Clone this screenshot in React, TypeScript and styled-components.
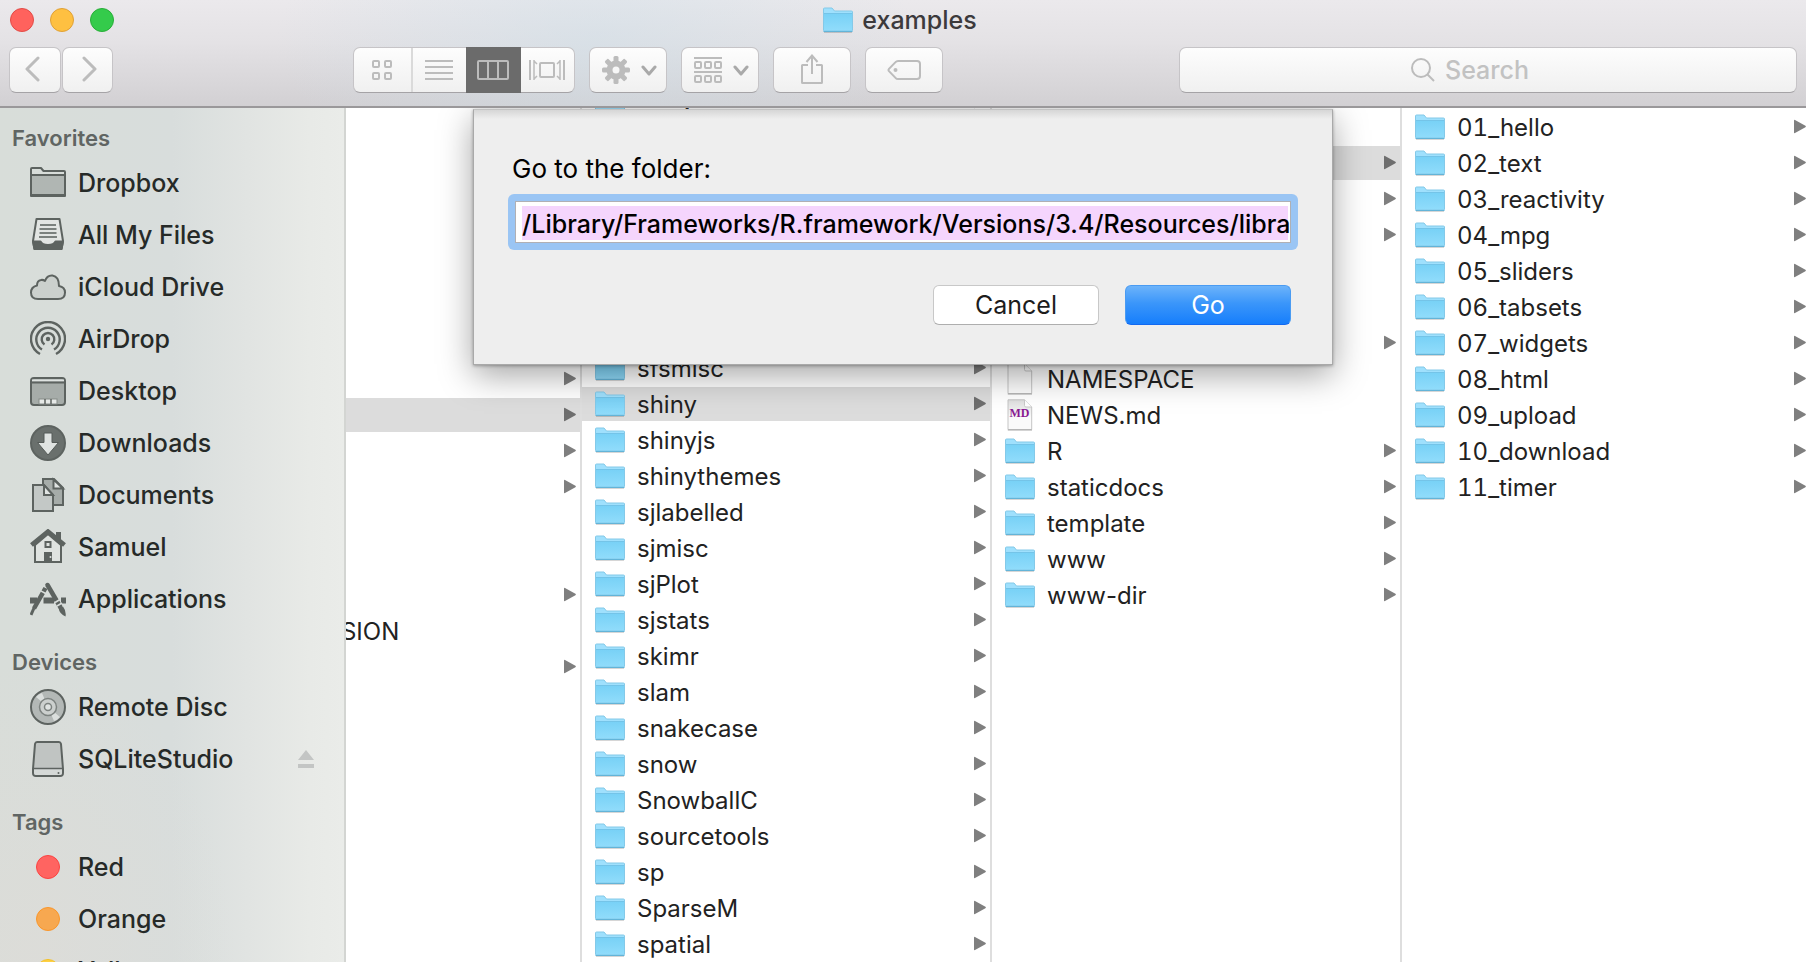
import React from "react";
import styled, { createGlobalStyle, css } from "styled-components";

const GlobalStyle = createGlobalStyle`
  *, *::before, *::after { box-sizing: border-box; }
  html, body, #root { height: 100%; }
  body {
    margin: 0;
    overflow: hidden;
    background: #fff;
    color: #262626;
    font-family: Inter, "Liberation Sans", sans-serif;
  }
  button, input { font-family: inherit; }
  h1, h2, ul { margin: 0; }
  svg { display: block; flex: none; }
`;

/* ---------- window frame ---------- */

const Window = styled.div`
  display: flex;
  flex-direction: column;
  height: 100vh;
`;

const Header = styled.header`
  flex: none;
  border-bottom: 2px solid #9a989a;
  padding-bottom: 13px;
  background:
    radial-gradient(ellipse 320px 160px at 33% 40%, rgba(205, 222, 232, 0.5), rgba(205, 222, 232, 0)),
    linear-gradient(#ebe9ec, #e4e2e5 40%, #d2d0d3);
`;

const TitleBar = styled.div`
  display: grid;
  grid-template-columns: 1fr auto 1fr;
  align-items: center;
  height: 40px;
  margin-bottom: 7px;
  padding: 0 16px 0 10px;
`;

const Lights = styled.div`
  display: flex;
  gap: 16px;
`;

const Light = styled.button<{ $fill: string; $edge: string }>`
  width: 24px;
  height: 24px;
  padding: 0;
  border: 1px solid ${(p) => p.$edge};
  border-radius: 50%;
  background: ${(p) => p.$fill};
`;

const Title = styled.h1`
  display: flex;
  align-items: center;
  gap: 9px;
  font-size: 25px;
  line-height: 32px;
  font-weight: 500;
  color: #3c3a3c;
`;

const Toolbar = styled.div`
  display: flex;
  align-items: center;
  gap: 14px;
  padding: 0 9px;
`;

const surface = css`
  height: 46px;
  border: 1px solid #c6c4c7;
  border-bottom-color: #a5a3a6;
  border-radius: 7px;
  background: linear-gradient(#fdfdfd, #f0f0f0);
  color: #bcbcbc;
`;

const ToolButton = styled.button<{ $width: number; $menu?: boolean }>`
  ${surface}
  display: flex;
  align-items: center;
  justify-content: center;
  gap: 11px;
  width: ${(p) => p.$width}px;
  padding: ${(p) => (p.$menu ? "0 0 0 2px" : "0")};
`;

const NavGroup = styled.div`
  display: flex;
  gap: 1px;
  margin-right: 226px;
`;

const Segments = styled.div`
  ${surface}
  display: flex;
  width: 222px;
`;

const Segment = styled.button<{ $active?: boolean; $first?: boolean }>`
  flex: ${(p) => (p.$first ? 58 : p.$active ? 56 : 53)} 1 0;
  display: flex;
  align-items: center;
  justify-content: center;
  margin: ${(p) => (p.$active ? "-1px 0" : "0")};
  padding: 0 2px 0 0;
  border: 0;
  border-right: ${(p) => (p.$first ? "2px solid #dadada" : "0")};
  background: ${(p) => (p.$active ? "#6b6b6b" : "transparent")};
  color: inherit;
`;

const Search = styled.label`
  ${surface}
  flex: 0 1 618px;
  display: flex;
  align-items: center;
  justify-content: center;
  gap: 10px;
  margin-left: auto;
`;

const SearchInput = styled.input`
  width: 120px;
  padding: 0;
  border: 0;
  outline: 0;
  background: none;
  font-size: 25px;
  line-height: 32px;
  font-weight: 500;
  color: #333;
  &::placeholder { color: #c2c2c2; opacity: 1; }
`;

const Body = styled.div`
  position: relative;
  flex: 1;
  min-height: 0;
  display: flex;
  overflow: hidden;
`;

/* ---------- sidebar ---------- */

const Sidebar = styled.nav`
  flex: none;
  display: flex;
  flex-direction: column;
  gap: 19px;
  width: 346px;
  padding-top: 12px;
  overflow: hidden;
  border-right: 2px solid #d3d5d2;
  background:
    radial-gradient(ellipse 200px 300px at 10% 100%, rgba(222, 220, 216, 0.7), rgba(222, 220, 216, 0)),
    linear-gradient(90deg, #d8ddd9, #d8dddc 50%, #e1e4e2 72%, #e8eae7 90%, #eaece9);
`;

const GroupTitle = styled.h2`
  padding-left: 12px;
  font-size: 22px;
  line-height: 37px;
  font-weight: 600;
  color: #606563;
`;

const Places = styled.ul`
  padding: 0;
  list-style: none;
`;

const Place = styled.li`
  display: flex;
  align-items: center;
  height: 52px;
  padding: 0 30px;
`;

const PlaceLink = styled.a`
  flex: 1;
  display: flex;
  align-items: center;
  gap: 12px;
  font-size: 25px;
  line-height: 32px;
  font-weight: 500;
  color: #262a28;
  text-decoration: none;
  white-space: nowrap;
`;

const Eject = styled.button`
  padding: 0;
  border: 0;
  background: none;
  color: #c3c5c4;
`;

const TagSlot = styled.span`
  flex: none;
  display: flex;
  justify-content: center;
  width: 36px;
`;

const TagDot = styled.span<{ $fill: string; $edge: string }>`
  width: 24px;
  height: 24px;
  border: 1px solid ${(p) => p.$edge};
  border-radius: 50%;
  background: ${(p) => p.$fill};
`;

/* ---------- columns ---------- */

const Columns = styled.main`
  flex: 1;
  min-width: 0;
  display: flex;
  overflow: hidden;
`;

const ScrolledColumn = styled.div`
  flex: none;
  display: flex;
  justify-content: flex-end;
  width: 236px;
  overflow: hidden;
`;

const Column = styled.ul<{ $scrolled?: boolean; $numbered?: boolean }>`
  flex: 1 0 410px;
  display: flex;
  flex-direction: column;
  gap: 2px;
  margin-top: ${(p) => (p.$scrolled ? "-11px" : "0")};
  padding: 2px 0 0;
  list-style: none;
  border-right: 2px solid #dedede;
  font-variant-numeric: ${(p) => (p.$numbered ? "tabular-nums" : "normal")};
`;

const Row = styled.li<{ $selected?: boolean }>`
  flex: none;
  display: flex;
  align-items: center;
  justify-content: flex-end;
  height: 34px;
  padding: 0 4px 0 13px;
  background: ${(p) => (p.$selected ? "#dcdcdc" : "transparent")};
  color: ${(p) => (p.$selected ? "#6e6e6e" : "#7f7f7f")};
`;

const Entry = styled.a`
  flex: 1;
  display: flex;
  align-items: center;
  gap: 12px;
  font-size: 24px;
  line-height: 34px;
  color: #222;
  text-decoration: none;
  white-space: nowrap;
`;

const IconSlot = styled.span`
  display: flex;
  justify-content: center;
  width: 30px;
`;

const EntryName = styled.span`
  padding-top: 2px;
  line-height: 32px;
`;

/* ---------- sheet ---------- */

const Sheet = styled.form`
  position: absolute;
  top: 1px;
  left: 0;
  right: 0;
  width: 860px;
  max-width: 100%;
  margin: 0 auto;
  padding: 44px 41px 39px;
  border: 1px solid #a9a9a9;
  border-top-color: #c2c2c2;
  background: linear-gradient(#d6d6d6, #eee 9px);
  box-shadow: 0 10px 32px rgba(0, 0, 0, 0.36), 0 1px 3px rgba(0, 0, 0, 0.3);
`;

const SheetLabel = styled.label`
  display: block;
  margin: 0 0 17px -3px;
  font-size: 26px;
  line-height: 30px;
  color: #000;
`;

const FocusRing = styled.div`
  margin: -7px;
  padding: 7px;
  border-radius: 6px;
  background: #9ac5f4;
`;

const PathInput = styled.input`
  display: block;
  width: 100%;
  height: 42px;
  padding: 6px 0 2px 6px;
  border: 1px solid #b0b0b4;
  border-radius: 0;
  outline: 0;
  background: #f5d5fd;
  box-shadow:
    inset 6px 0 #fff,
    inset -2px 0 #fff,
    inset 0 4px #fff,
    inset 0 -2px #fff;
  font-size: 25px;
  line-height: 32px;
  font-weight: 500;
  color: #000;
`;

const Actions = styled.div`
  display: flex;
  justify-content: flex-end;
  gap: 26px;
  margin-top: 42px;
`;

const SheetButton = styled.button<{ $primary?: boolean }>`
  width: 166px;
  height: 40px;
  padding: 0;
  border: 1px solid ${(p) => (p.$primary ? "#4a9bf2" : "#c8c8c8")};
  border-bottom-color: ${(p) => (p.$primary ? "#1369f0" : "#aeaeae")};
  border-radius: 6px;
  background: ${(p) => (p.$primary ? "linear-gradient(#6cb3fa, #3b96fa 45%, #167efc)" : "#fff")};
  font-size: 25px;
  line-height: 32px;
  color: ${(p) => (p.$primary ? "#fff" : "#1c1c1c")};
`;

/* ---------- drawings ---------- */

const Folder = () => (
  <svg width="30" height="26" viewBox="0 0 30 26">
    <defs>
      <linearGradient id="folderFace" x1="0" y1="0" x2="0" y2="1">
        <stop offset="0" stopColor="#78d1f6" />
        <stop offset="1" stopColor="#90dcfb" />
      </linearGradient>
    </defs>
    <path d="M1 25h28" stroke="#000" strokeOpacity=".16" strokeWidth="2" />
    <path d="M.5 23.5V2Q.5 1 1.500 1H9l2.500 3H28.500Q29.500 4 29.500 5V23.500Z" fill="#9fe0fd" stroke="#84c9e8" />
    <path d="M1 6.500H29V23.500H1Z" fill="url(#folderFace)" />
    <path d="M1 6.500H29" stroke="#74c4e8" />
    <path d="M.5 24.500H29.500" stroke="#63b4d8" />
  </svg>
);

const Arrow = () => (
  <svg width="12" height="16" viewBox="0 0 12 16">
    <path d="M0 1.500V13.500Q0 14.600 1 14.100L11.400 8.200Q12.300 7.500 11.400 6.800L1 .9Q0 .4 0 1.500Z" fill="currentColor" />
  </svg>
);

const FileIcon = ({ md }: { md?: boolean }) => (
  <svg width="26" height="32" viewBox="0 0 26 32">
    <defs>
      <linearGradient id="paper" x1="0" y1="0" x2="0" y2="1">
        <stop offset="0" stopColor="#dedede" />
        <stop offset=".6" stopColor="#fafafa" />
      </linearGradient>
    </defs>
    <path d="M1 .8H17.500L24.700 8V30.500H1Z" fill={md ? "url(#paper)" : "#fdfdfd"} stroke="#c4c4c4" />
    <path d="M17.500.8V6.500Q17.500 8 19 8H24.700" fill="#fff" stroke="#c9c9c9" />
    <path d="M.8 31H25" stroke="#a8a8a8" />
    {md && (
      <text x="12.500" y="18" textAnchor="middle" fontFamily="Liberation Serif, serif" fontWeight="700" fontSize="12" fill="#8a1a92">
        MD
      </text>
    )}
  </svg>
);

const glyph = { fill: "none", stroke: "currentColor" } as const;

const Chevron = ({ flip }: { flip?: boolean }) => (
  <svg width="20" height="28" viewBox="0 0 20 28" {...glyph} strokeWidth="3" strokeLinecap="round" strokeLinejoin="round">
    <path d={flip ? "M6 2L17 13L6 24" : "M13 2L2 13L13 24"} />
  </svg>
);

const DownChevron = () => (
  <svg width="16" height="12" viewBox="0 0 16 12" fill="none" stroke="#a9a9a9" strokeWidth="3" strokeLinecap="round" strokeLinejoin="round">
    <path d="M2 3L8 10L14 3" />
  </svg>
);

const GridIcon = () => (
  <svg width="20" height="20" viewBox="0 0 20 20" {...glyph} strokeWidth="2">
    <rect x="1" y="1" width="6" height="6" rx="1" />
    <rect x="13" y="1" width="6" height="6" rx="1" />
    <rect x="1" y="13" width="6" height="6" rx="1" />
    <rect x="13" y="13" width="6" height="6" rx="1" />
  </svg>
);

const ListIcon = () => (
  <svg width="28" height="20" viewBox="0 0 28 20" {...glyph} strokeWidth="2">
    <path d="M0 1H28M0 7H28M0 13H28M0 19H28" />
  </svg>
);

const ColumnsIcon = () => (
  <svg width="32" height="20" viewBox="0 0 32 20" {...glyph} strokeWidth="2">
    <rect x="1" y="1" width="30" height="18" rx="1" />
    <path d="M11 1V19M21 1V19" />
  </svg>
);

const FlowIcon = () => (
  <svg width="36" height="20" viewBox="0 0 36 20" {...glyph} strokeWidth="2">
    <path d="M1 0V20M35 0V20" />
    <rect x="11" y="3" width="14" height="14" rx="1" />
    <path d="M5 1L8 4M5 0V20M5 19L8 16M31 0V20M31 1L28 4M31 19L28 16" strokeWidth="1.500" />
  </svg>
);

const GearIcon = () => (
  <svg width="28" height="28" viewBox="-14 -14 28 28" fill="currentColor">
    {[0, 45, 90, 135].map((a) => (
      <rect key={a} x="-2.500" y="-14" width="5" height="28" rx="1.500" transform={`rotate(${a})`} />
    ))}
    <circle r="9.500" />
    <circle r="3.500" fill="#f7f7f7" />
  </svg>
);

const ArrangeIcon = () => (
  <svg width="28" height="26" viewBox="0 0 28 26" {...glyph} strokeWidth="2">
    <path d="M0 1H28M0 15H28" />
    {[5, 19].map((y) => [1, 11, 21].map((x) => <rect key={`${x}-${y}`} x={x} y={y} width="6" height="6" rx="1" />))}
  </svg>
);

const ShareIcon = () => (
  <svg width="24" height="32" viewBox="0 0 24 32" {...glyph} strokeWidth="2">
    <path d="M8 11H2.500Q2 11 2 11.500V28.500Q2 29 2.500 29H21.500Q22 29 22 28.500V11.500Q22 11 21.500 11H16" />
    <path d="M12 20V2M6.500 8L12 1.500L17.500 8" />
  </svg>
);

const TagIcon = () => (
  <svg width="34" height="20" viewBox="0 0 34 20" {...glyph} strokeWidth="2">
    <path d="M11 1H30Q33 1 33 4V16Q33 19 30 19H11Q9.500 19 8.500 17.800L2 11.200Q1 10 2 8.800L8.500 2.200Q9.500 1 11 1Z" />
    <circle cx="8.500" cy="10" r="2" fill="currentColor" stroke="none" />
  </svg>
);

const SearchIcon = () => (
  <svg width="24" height="24" viewBox="0 0 24 24" {...glyph} strokeWidth="2">
    <circle cx="10" cy="10" r="9" />
    <path d="M16.500 16.500L23 23" />
  </svg>
);

const ink = "#5d6360";
const wash = "rgba(93,99,96,.32)";

const placeIcons: Record<string, React.ReactNode> = {
  dropbox: (
    <g fill="none" stroke={ink} strokeWidth="2" strokeLinejoin="round">
      <path d="M1 31V4Q1 3 2 3H11L13.500 6H34Q35 6 35 7V31Z" />
      <path d="M1 11Q1 10 2 10H34Q35 10 35 11V29Q35 30 34 30H2Q1 30 1 29Z" fill={wash} />
    </g>
  ),
  files: (
    <g fill="none" stroke={ink} strokeWidth="2" strokeLinejoin="round">
      <path d="M6.500 2H29.500L33 24L31.500 32H4.500L3 24Z" fill="rgba(255,255,255,.25)" />
      <path d="M3 24.500H10.500Q12 28 18 28T25.500 24.500H33L31.500 32H4.500Z" fill={ink} />
      <path d="M10 8H26M9.500 12H26.500M9.500 16H26.500M9 20H27" stroke="#7b817e" />
    </g>
  ),
  cloud: (
    <path
      d="M8 30Q1 30 1 23.500Q1 18 7 16.500Q7 11.500 11 11Q13 10.500 15 12Q17 6 22.500 6.500Q29 7.500 29 17Q35 18 35 23.500Q35 30 28 30Z"
      fill="rgba(93,99,96,.1)"
      stroke={ink}
      strokeWidth="2"
      strokeLinejoin="round"
    />
  ),
  airdrop: (
    <g fill="none" stroke={ink} strokeWidth="2.400">
      <path d="M10 33A17 17 0 1 1 26 33" />
      <path d="M12 28.500A11.700 11.700 0 1 1 24 28.500" />
      <path d="M14.500 23.500A6.300 6.300 0 1 1 21.500 23.500" />
      <circle cx="18" cy="18" r="2.200" fill={ink} stroke="none" />
    </g>
  ),
  desktop: (
    <g fill="none" stroke={ink} strokeWidth="2">
      <rect x="1" y="5" width="34" height="27" rx="3" fill="rgba(93,99,96,.4)" />
      <path d="M2 7.500H34" stroke="#dfe3e1" />
      <path d="M1 9.500H35" />
      <rect x="9" y="26" width="18" height="5" fill="#e6e9e7" stroke="#858b88" strokeWidth="1" />
      <path d="M15 26V31M21 26V31" strokeWidth="1.500" />
    </g>
  ),
  downloads: (
    <g>
      <circle cx="18" cy="18" r="17" fill="#6a706d" stroke={ink} strokeWidth="2" />
      <path d="M14 8H22V17.500H28.500L18 30L7.500 17.500H14Z" fill="#dfe3e1" stroke="#555b58" />
    </g>
  ),
  documents: (
    <g stroke={ink} strokeWidth="2">
      <path d="M13 2H24L33 11V28H13Z" fill="rgba(93,99,96,.4)" />
      <path d="M23.500 2.500V11.500H33Z" fill="#e0e4e2" />
      <path d="M3 8H14L23 18V34H3Z" fill="#c3c8c6" />
      <path d="M14 8V18H23Z" fill="#e0e4e2" />
    </g>
  ),
  home: (
    <g fill="none" stroke={ink} strokeWidth="2">
      <path d="M5 16V33H31V16L18 5Z" fill="rgba(255,255,255,.18)" />
      <path d="M1.500 16L18 2.500L34.500 16" strokeWidth="4.500" />
      <path d="M28.500 3V11" strokeWidth="5" />
      <rect x="15.500" y="13" width="5" height="5" />
      <path d="M14 23H22V33H14Z" fill={ink} stroke="none" />
      <circle cx="20.500" cy="28" r="1" fill="#dfe3e1" stroke="none" />
    </g>
  ),
  apps: (
    <g fill="none" stroke={ink}>
      <path d="M0 19.500H7M13.500 19.500H24M31 19.500H36" strokeWidth="6" />
      <path d="M15.500 7L4 27.500" strokeWidth="4.500" strokeDasharray="4 1.500 24" />
      <path d="M4 27L1 34" strokeWidth="3" />
      <path d="M17.500 4L30 25.500" strokeWidth="4.500" strokeLinecap="round" />
      <path d="M25 21.500L30 18.500M27 25L32 22" stroke="#d8dddb" strokeWidth="1.500" />
      <path d="M28.500 27Q29.500 33 35.500 35.500Q36.500 30 33 25.500Z" fill={ink} stroke="none" />
    </g>
  ),
  disc: (
    <g fill="none" stroke={ink}>
      <circle cx="18" cy="18" r="17" fill="#b3b8b6" strokeWidth="2" />
      <path d="M18 18L6 8Q8.500 5 12 4ZM18 18L30 28Q27.500 31 24 32Z" fill="#dbdfdd" stroke="none" />
      <circle cx="18" cy="18" r="8.500" fill="#ccd0ce" stroke="#7d8380" strokeWidth="1.500" />
      <circle cx="18" cy="18" r="3.500" fill="#dfe3e1" stroke="#7d8380" strokeWidth="1.500" />
    </g>
  ),
  drive: (
    <g fill="none" stroke={ink} strokeWidth="2" strokeLinejoin="round">
      <path d="M7 1H29Q30.500 1 31 3L33 28V32Q33 35 30 35H6Q3 35 3 32V28L5 3Q5.500 1 7 1Z" fill="#c0c4c2" />
      <path d="M4 28H32V32Q32 34 30 34H6Q4 34 4 32Z" fill="#d5d9d7" stroke="none" />
      <path d="M3 27.500H33" strokeWidth="1.500" />
      <circle cx="28.500" cy="32" r="1" fill={ink} stroke="none" />
    </g>
  ),
};

const PlaceIcon = ({ name }: { name: string }) => (
  <svg width="36" height="36" viewBox="0 0 36 36">{placeIcons[name]}</svg>
);

/* ---------- data ---------- */

const favorites = [
  ["dropbox", "Dropbox"],
  ["files", "All My Files"],
  ["cloud", "iCloud Drive"],
  ["airdrop", "AirDrop"],
  ["desktop", "Desktop"],
  ["downloads", "Downloads"],
  ["documents", "Documents"],
  ["home", "Samuel"],
  ["apps", "Applications"],
];

const tags = [
  ["Red", "#ff6461", "#fb4341"],
  ["Orange", "#f7a850", "#fa962a"],
  ["Yellow", "#fdd044", "#f5c023"],
];

type Item = { name?: string; kind?: "file" | "md"; leaf?: boolean; selected?: boolean };

const blank = (n: number): Item[] => Array.from({ length: n }, () => ({ leaf: true }));
const folders = (...names: string[]): Item[] => names.map((name) => ({ name }));

const parentItems: Item[] = [
  ...blank(7),
  {},
  { selected: true },
  {},
  {},
  ...blank(2),
  {},
  { name: "SVN-REVISION", kind: "file", leaf: true },
  {},
];

const libraryItems: Item[] = [
  { name: "rprojroot" },
  ...blank(6),
  { name: "sfsmisc" },
  { name: "shiny", selected: true },
  ...folders(
    "shinyjs", "shinythemes", "sjlabelled", "sjmisc", "sjPlot", "sjstats", "skimr", "slam",
    "snakecase", "snow", "SnowballC", "sourcetools", "sp", "SparseM", "spatial",
  ),
];

const shinyItems: Item[] = [
  ...blank(1),
  { selected: true },
  {},
  {},
  ...blank(2),
  {},
  { name: "NAMESPACE", kind: "file", leaf: true },
  { name: "NEWS.md", kind: "md", leaf: true },
  ...folders("R", "staticdocs", "template", "www", "www-dir"),
];

const exampleItems = folders(
  "01_hello", "02_text", "03_reactivity", "04_mpg", "05_sliders", "06_tabsets",
  "07_widgets", "08_html", "09_upload", "10_download", "11_timer",
);

type ItemColumnProps = { items: Item[]; scrolled?: boolean; numbered?: boolean };

const ItemColumn = ({ items, scrolled, numbered }: ItemColumnProps) => (
  <Column $scrolled={scrolled} $numbered={numbered}>
    {items.map((item, i) => (
      <Row key={i} $selected={item.selected}>
        {item.name && (
          <Entry href="#">
            <IconSlot>{item.kind ? <FileIcon md={item.kind === "md"} /> : <Folder />}</IconSlot>
            <EntryName>{item.name}</EntryName>
          </Entry>
        )}
        {!item.leaf && <Arrow />}
      </Row>
    ))}
  </Column>
);

const PlaceRow = ({ icon, name }: { icon: string; name: string }) => (
  <Place>
    <PlaceLink href="#">
      <PlaceIcon name={icon} />
      {name}
    </PlaceLink>
    {icon === "drive" && (
      <Eject aria-label="Eject">
        <svg width="16" height="18" viewBox="0 0 16 18" fill="currentColor">
          <path d="M8 0L16 10H0ZM0 14H16V18H0Z" />
        </svg>
      </Eject>
    )}
  </Place>
);

export default function App() {
  return (
    <Window>
      <GlobalStyle />
      <Header>
        <TitleBar>
          <Lights>
            <Light $fill="#ff625d" $edge="#e24b47" aria-label="Close" />
            <Light $fill="#fec041" $edge="#e0a136" aria-label="Minimize" />
            <Light $fill="#34cb4b" $edge="#28ae38" aria-label="Zoom" />
          </Lights>
          <Title>
            <Folder />
            examples
          </Title>
        </TitleBar>
        <Toolbar>
          <NavGroup>
            <ToolButton $width={52} aria-label="Back"><Chevron /></ToolButton>
            <ToolButton $width={51} aria-label="Forward"><Chevron flip /></ToolButton>
          </NavGroup>
          <Segments>
            <Segment $first aria-label="Icons"><GridIcon /></Segment>
            <Segment aria-label="List"><ListIcon /></Segment>
            <Segment $active aria-label="Columns"><ColumnsIcon /></Segment>
            <Segment aria-label="Cover Flow"><FlowIcon /></Segment>
          </Segments>
          <ToolButton $width={78} $menu aria-label="Action"><GearIcon /><DownChevron /></ToolButton>
          <ToolButton $width={78} $menu aria-label="Arrange"><ArrangeIcon /><DownChevron /></ToolButton>
          <ToolButton $width={78} aria-label="Share"><ShareIcon /></ToolButton>
          <ToolButton $width={78} aria-label="Tags"><TagIcon /></ToolButton>
          <Search>
            <SearchIcon />
            <SearchInput type="text" placeholder="Search" aria-label="Search" />
          </Search>
        </Toolbar>
      </Header>
      <Body>
        <Sidebar>
          <section>
            <GroupTitle>Favorites</GroupTitle>
            <Places>
              {favorites.map(([icon, name]) => <PlaceRow key={name} icon={icon} name={name} />)}
            </Places>
          </section>
          <section>
            <GroupTitle>Devices</GroupTitle>
            <Places>
              <PlaceRow icon="disc" name="Remote Disc" />
              <PlaceRow icon="drive" name="SQLiteStudio" />
            </Places>
          </section>
          <section>
            <GroupTitle>Tags</GroupTitle>
            <Places>
              {tags.map(([name, fill, edge]) => (
                <Place key={name}>
                  <PlaceLink href="#">
                    <TagSlot><TagDot $fill={fill} $edge={edge} /></TagSlot>
                    {name}
                  </PlaceLink>
                </Place>
              ))}
            </Places>
          </section>
        </Sidebar>
        <Columns>
          <ScrolledColumn>
            <ItemColumn items={parentItems} />
          </ScrolledColumn>
          <ItemColumn items={libraryItems} scrolled />
          <ItemColumn items={shinyItems} />
          <ItemColumn items={exampleItems} numbered />
        </Columns>
        <Sheet onSubmit={(e) => e.preventDefault()}>
          <SheetLabel htmlFor="path">Go to the folder:</SheetLabel>
          <FocusRing>
            <PathInput id="path" type="text" defaultValue="/Library/Frameworks/R.framework/Versions/3.4/Resources/libra" />
          </FocusRing>
          <Actions>
            <SheetButton type="button">Cancel</SheetButton>
            <SheetButton type="submit" $primary>Go</SheetButton>
          </Actions>
        </Sheet>
      </Body>
    </Window>
  );
}
